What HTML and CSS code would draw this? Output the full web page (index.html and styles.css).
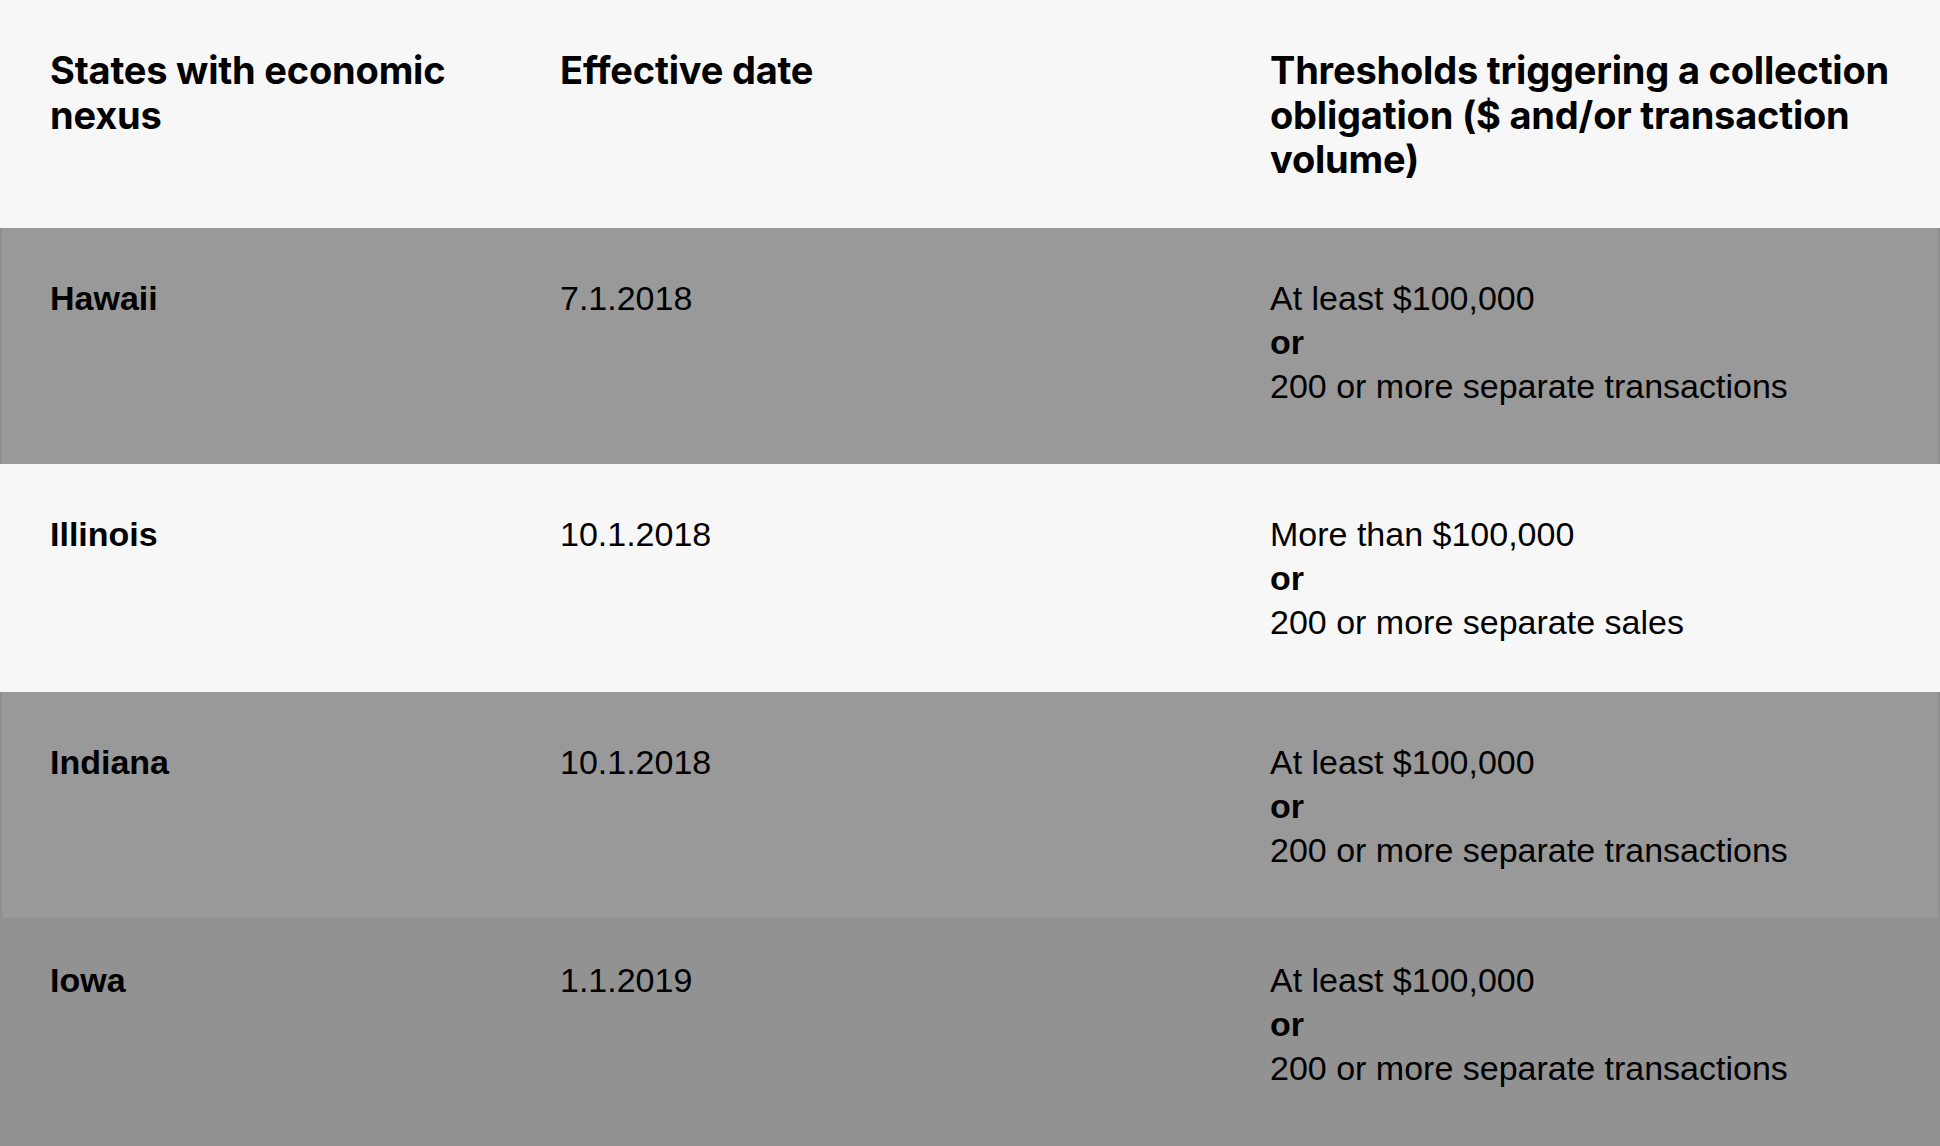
FILE: index.html
```html
<!DOCTYPE html>
<html lang="en">
<head>
<meta charset="utf-8">
<title>Economic nexus thresholds</title>
<link rel="stylesheet" href="styles.css">
</head>
<body>
<div class="nexus-table">
  <div class="row row-head">
    <div class="cell">States with economic<br>nexus</div>
    <div class="cell">Effective date</div>
    <div class="cell">Thresholds triggering a collection<br>obligation ($ and/or transaction<br>volume)</div>
  </div>
  <div class="row row-dark row-hawaii">
    <div class="cell state">Hawaii</div>
    <div class="cell">7.1.2018</div>
    <div class="cell">At least $100,000<br><b>or</b><br>200 or more separate transactions</div>
  </div>
  <div class="row row-light row-illinois">
    <div class="cell state">Illinois</div>
    <div class="cell">10.1.2018</div>
    <div class="cell">More than $100,000<br><b>or</b><br>200 or more separate sales</div>
  </div>
  <div class="row row-dark row-indiana">
    <div class="cell state">Indiana</div>
    <div class="cell">10.1.2018</div>
    <div class="cell">At least $100,000<br><b>or</b><br>200 or more separate transactions</div>
  </div>
  <div class="row row-last">
    <div class="cell state">Iowa</div>
    <div class="cell">1.1.2019</div>
    <div class="cell">At least $100,000<br><b>or</b><br>200 or more separate transactions</div>
  </div>
</div>
</body>
</html>
```

FILE: styles.css
```css
html, body {
  margin: 0;
  padding: 0;
  background: #f7f7f7;
}

body {
  font-family: "Liberation Sans", Arial, sans-serif;
  color: #000;
}

.nexus-table {
  display: flex;
  flex-direction: column;
}

.row {
  display: grid;
  grid-template-columns: 510px 710px 1fr;
  padding: 48px 30px 0 50px;
  box-sizing: border-box;
  font-size: 34px;
  line-height: 44px;
}

.row-head {
  height: 228px;
  padding-top: 48px;
  font-family: Inter, "Open Sans", sans-serif;
  font-weight: 700;
  font-size: 38px;
  line-height: 44.5px;
  letter-spacing: -0.2px;
  background: #f7f7f7;
}

.row-dark {
  background: #999999;
  box-shadow: inset 2px 0 #8f8f8f, inset -2px 0 #8f8f8f;
}

.row-light {
  background: #f7f7f7;
}

.row-hawaii {
  height: 236px;
}

.row-illinois {
  height: 228px;
}

.row-indiana {
  height: 226px;
}

.row-last {
  height: 236px;
  padding-top: 40px;
  background: #929292;
}

.state {
  font-weight: 700;
}

.cell b {
  font-weight: 700;
}
```
